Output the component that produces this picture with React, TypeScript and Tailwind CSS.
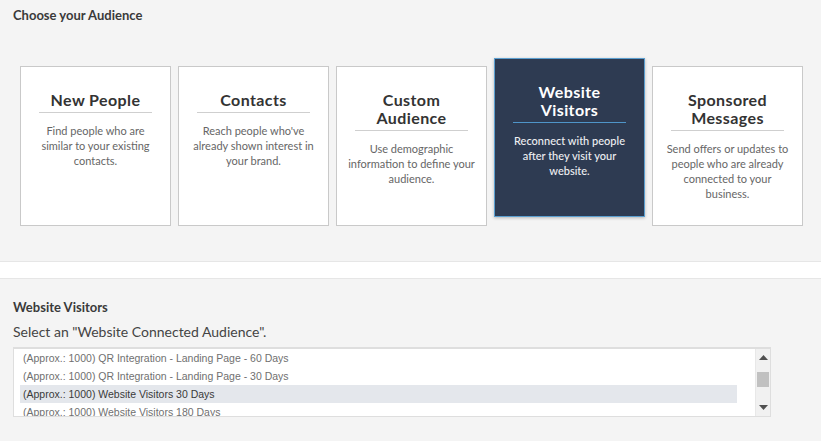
import React from "react";

type Audience = {
  title: string[];
  description: string;
  selected?: boolean;
};

const audiences: Audience[] = [
  { title: ["New People"], description: "Find people who are similar to your existing contacts." },
  { title: ["Contacts"], description: "Reach people who've already shown interest in your brand." },
  { title: ["Custom", "Audience"], description: "Use demographic information to define your audience." },
  { title: ["Website", "Visitors"], description: "Reconnect with people after they visit your website.", selected: true },
  { title: ["Sponsored", "Messages"], description: "Send offers or updates to people who are already connected to your business." },
];

const options = [
  "(Approx.: 1000) QR Integration - Landing Page - 60 Days",
  "(Approx.: 1000) QR Integration - Landing Page - 30 Days",
  "(Approx.: 1000) Website Visitors 30 Days",
  "(Approx.: 1000) Website Visitors 180 Days",
];

function AudienceCard({ title, description, selected }: Audience) {
  return (
    <div
      className={
        selected
          ? "w-[151px] h-[159px] -translate-y-2 bg-[#2e3b52] border border-[#5b9fd0] px-[18px] pt-[24px] text-center shadow-[0_1px_3px_rgba(0,0,0,0.25)]"
          : "w-[151px] h-[160px] bg-white border border-[#c9c9c9] px-[18px] pt-[24px] text-center"
      }
    >
      <div
        className={
          selected
            ? "text-[16px] leading-[18px] font-bold tracking-[0.4px] text-white pb-[3px] border-b border-[#4f95c9]"
            : "text-[16px] leading-[18px] font-bold tracking-[0.4px] text-[#333] pb-[3px] border-b border-[#cfcfcf]"
        }
      >
        {title.map((t) => (
          <div key={t}>{t}</div>
        ))}
      </div>
      <p
        className={
          selected
            ? "mt-[10px] -mx-[8px] text-[11px] leading-[15px] text-[#eef0f3] font-medium"
            : "mt-[10px] -mx-[8px] text-[11px] leading-[15px] text-[#666]"
        }
      >
        {description}
      </p>
    </div>
  );
}

export default function App() {
  return (
    <div className="w-[821px] h-[441px] overflow-hidden bg-[#f4f4f4] font-['Lato','Noto_Sans',sans-serif]">
      <section className="h-[262px] px-[13px] pt-[7px] border-b border-[#e6e6e6]">
        <h2 className="text-[13px] leading-[16px] font-bold text-[#3a3a3a]">Choose your Audience</h2>
        <div className="flex gap-[7px] pl-[7px] mt-[43px]">
          {audiences.map((a) => (
            <AudienceCard key={a.title.join(" ")} {...a} />
          ))}
        </div>
      </section>
      <div className="h-[17px] bg-white border-b border-[#e6e6e6]" />
      <section className="px-[13px] pt-[20px]">
        <h2 className="text-[13px] leading-[16px] font-bold text-[#3a3a3a]">Website Visitors</h2>
        <p className="mt-[8px] text-[14px] leading-[18px] text-[#444]">
          Select an "Website Connected Audience".
        </p>
        <div className="mt-[6px] w-[758px] h-[70px] flex bg-white border border-[#dedede] border-t-2 overflow-hidden">
          <ul className="flex-1 pl-[6px] pr-[18px] font-['Liberation_Sans',Arial,sans-serif] text-[10.5px]">
            {options.map((o, i) => (
              <li
                key={o}
                className={
                  i === 2
                    ? "h-[18px] leading-[18px] pl-[3px] bg-[#e4e7ec] text-[#3a3a3a] whitespace-nowrap"
                    : "h-[18px] leading-[18px] pl-[3px] text-[#707070] whitespace-nowrap"
                }
              >
                {o}
              </li>
            ))}
          </ul>
          <div className="w-[15px] bg-[#f1f1f1] border-l border-[#e8e8e8] flex flex-col items-center justify-between py-[6px]">
            <svg width="9" height="5" viewBox="0 0 9 5">
              <path d="M4.5 0L9 5H0z" fill="#505050" />
            </svg>
            <div className="w-[12px] h-[15px] bg-[#c1c1c1] -mt-[6px]" />
            <svg width="9" height="5" viewBox="0 0 9 5">
              <path d="M0 0H9L4.5 5z" fill="#505050" />
            </svg>
          </div>
        </div>
      </section>
    </div>
  );
}
